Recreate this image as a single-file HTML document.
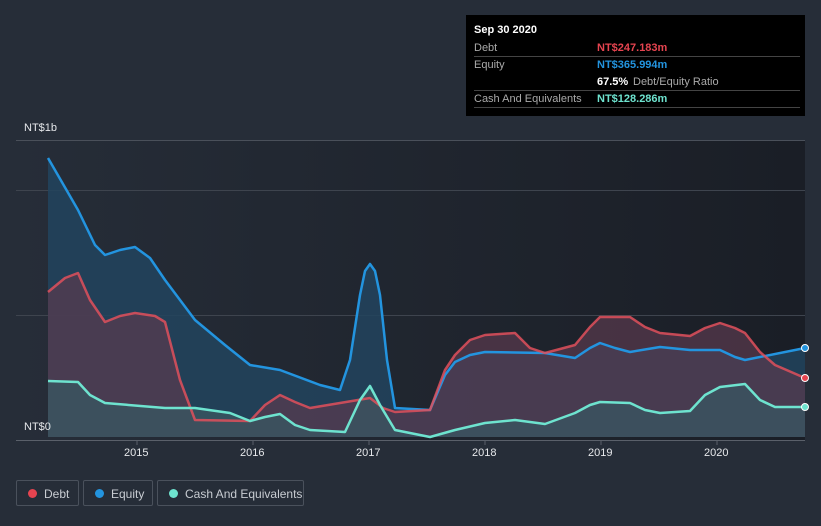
<!DOCTYPE html>
<html><head><meta charset="utf-8"><style>
body{margin:0;background:#262d38;font-family:"Liberation Sans",sans-serif;}
.wrap{position:relative;width:821px;height:526px;overflow:hidden;background:#262d38}
.tip{position:absolute;left:466px;top:15px;width:339px;height:101px;background:#000;color:#fff;font-size:11px}
.tip .r{position:absolute;left:8px;right:5px;border-bottom:1px solid #444;height:16px;line-height:16px}
.lg{position:absolute;top:480px;height:26px;border:1px solid #4a515c;border-radius:2px;color:#c8ccd2;font-size:12px;line-height:26px;box-sizing:border-box}
.lg i{position:absolute;left:11px;top:8px;width:9px;height:9px;border-radius:50%}
.lg span{position:absolute;left:27px}
.ax{position:absolute;color:#e6e8eb;font-size:11px}
</style></head><body><div class="wrap">
<svg width="821" height="526" style="position:absolute;left:0;top:0">
<defs><linearGradient id="bg" x1="0" x2="1"><stop offset="0" stop-color="#262d38"/><stop offset="1" stop-color="#1a1e26"/></linearGradient></defs>
<rect x="16" y="140" width="789" height="300" fill="url(#bg)"/>
<line x1="16" y1="140.5" x2="805" y2="140.5" stroke="#4a505a"/>
<line x1="16" y1="190.5" x2="805" y2="190.5" stroke="#3e444e"/>
<line x1="16" y1="315.5" x2="805" y2="315.5" stroke="#3e444e"/>
<polygon fill="#22445e" fill-opacity="0.85" points="48,437 48,158 78,210 95,245 105,255 120,250 135,247 150,258 165,280 195,320 225,345 250,365 280,370 320,385 340,390 350,360 360,295 365,271 370,264 375,271 380,295 387,360 395,408 430,410 445,375 455,362 470,355 485,352 545,353 575,358 590,348 600,343 615,348 630,352 660,347 690,350 720,350 735,357 745,360 805,348 805,437"/>
<polygon fill="#5a3a4e" fill-opacity="0.7" points="48,437 48,292 65,278 78,273 90,300 105,322 120,316 135,313 155,316 165,322 180,380 195,420 250,421 265,405 280,395 295,402 310,408 340,403 370,398 383,408 395,412 430,410 445,370 455,355 470,340 485,335 515,333 530,348 545,353 575,345 590,327 600,317 630,317 645,327 660,333 690,336 705,328 720,323 735,328 745,333 760,352 775,365 805,378 805,437"/>
<polygon fill="#3a5560" fill-opacity="0.8" points="48,437 48,381 78,382 90,395 105,403 165,408 195,408 230,413 250,421 265,417 280,414 295,425 310,430 345,432 360,400 370,386 380,405 395,430 430,437 455,430 485,423 515,420 545,424 575,413 590,405 600,402 630,403 645,410 660,413 690,411 705,395 720,387 745,384 760,400 775,407 805,407 805,437"/>
<g fill="none" stroke-width="2.5" stroke-linejoin="round">
<polyline stroke="#2394df" points="48,158 78,210 95,245 105,255 120,250 135,247 150,258 165,280 195,320 225,345 250,365 280,370 320,385 340,390 350,360 360,295 365,271 370,264 375,271 380,295 387,360 395,408 430,410 445,375 455,362 470,355 485,352 545,353 575,358 590,348 600,343 615,348 630,352 660,347 690,350 720,350 735,357 745,360 805,348"/>
<polyline stroke="#e0505c" stroke-opacity="0.85" points="48,292 65,278 78,273 90,300 105,322 120,316 135,313 155,316 165,322 180,380 195,420 250,421 265,405 280,395 295,402 310,408 340,403 370,398 383,408 395,412 430,410 445,370 455,355 470,340 485,335 515,333 530,348 545,353 575,345 590,327 600,317 630,317 645,327 660,333 690,336 705,328 720,323 735,328 745,333 760,352 775,365 805,378"/>
<polyline stroke="#6ee3cf" points="48,381 78,382 90,395 105,403 165,408 195,408 230,413 250,421 265,417 280,414 295,425 310,430 345,432 360,400 370,386 380,405 395,430 430,437 455,430 485,423 515,420 545,424 575,413 590,405 600,402 630,403 645,410 660,413 690,411 705,395 720,387 745,384 760,400 775,407 805,407"/>
</g>
<line x1="16" y1="440.5" x2="805" y2="440.5" stroke="#5a606a"/>
<g stroke="#5a606a"><line x1="137" y1="440" x2="137" y2="445"/><line x1="253" y1="440" x2="253" y2="445"/><line x1="369" y1="440" x2="369" y2="445"/><line x1="485" y1="440" x2="485" y2="445"/><line x1="601" y1="440" x2="601" y2="445"/><line x1="717" y1="440" x2="717" y2="445"/></g>
<circle cx="805" cy="348" r="3.5" fill="#2394df" stroke="#fff" stroke-width="1"/>
<circle cx="805" cy="378" r="3.5" fill="#e64450" stroke="#fff" stroke-width="1"/>
<circle cx="805" cy="407" r="3.5" fill="#6ee3cf" stroke="#fff" stroke-width="1"/>
</svg>
<div class="ax" style="left:24px;top:122px">NT$1b</div>
<div class="ax" style="left:24px;top:421px">NT$0</div>
<div class="ax" style="left:124px;top:447px">2015</div>
<div class="ax" style="left:240px;top:447px">2016</div>
<div class="ax" style="left:356px;top:447px">2017</div>
<div class="ax" style="left:472px;top:447px">2018</div>
<div class="ax" style="left:588px;top:447px">2019</div>
<div class="ax" style="left:704px;top:447px">2020</div>
<div class="tip">
<div style="position:absolute;left:8px;top:9px;font-weight:bold">Sep 30 2020</div>
<div class="r" style="top:25px"><span style="color:#aaa">Debt</span><b style="position:absolute;left:123px;color:#e64450">NT$247.183m</b></div>
<div class="r" style="top:42px;border:none"><span style="color:#aaa">Equity</span><b style="position:absolute;left:123px;color:#2394df">NT$365.994m</b></div>
<div class="r" style="top:59px"><b style="position:absolute;left:123px">67.5%</b><span style="position:absolute;left:159px;color:#aaa">Debt/Equity Ratio</span></div>
<div class="r" style="top:76px"><span style="color:#aaa">Cash And Equivalents</span><b style="position:absolute;left:123px;color:#6ee3cf">NT$128.286m</b></div>
</div>
<div class="lg" style="left:16px;width:63px"><i style="background:#e64450"></i><span>Debt</span></div>
<div class="lg" style="left:83px;width:70px"><i style="background:#2394df"></i><span>Equity</span></div>
<div class="lg" style="left:157px;width:147px"><i style="background:#6ee3cf"></i><span>Cash And Equivalents</span></div>
</div></body></html>
